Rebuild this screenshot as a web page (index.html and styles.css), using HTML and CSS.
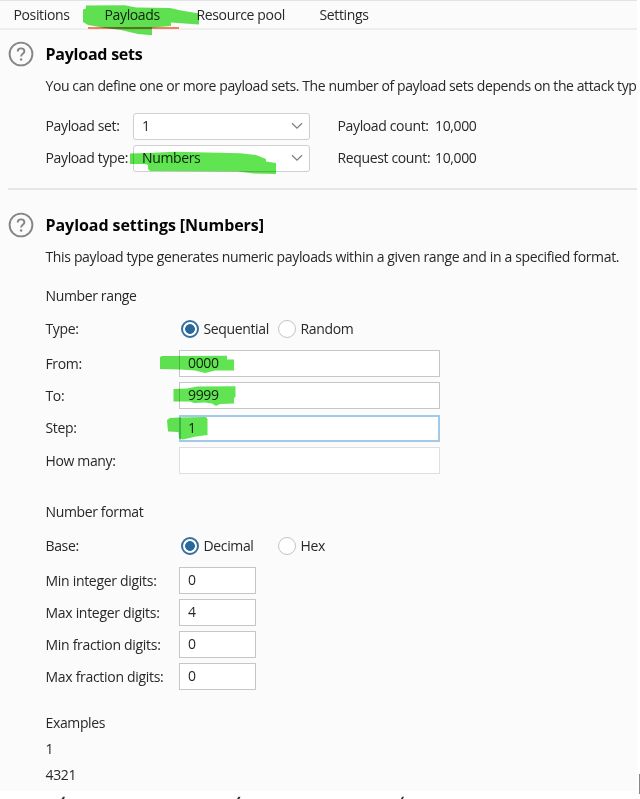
FILE: index.html
```html
<!DOCTYPE html>
<html lang="en">
<head>
<meta charset="utf-8">
<title>Payloads</title>
<link rel="stylesheet" href="styles.css">
</head>
<body>
<main class="panel">
  <nav class="tabs">
    <span class="tab positions">Positions</span>
    <span class="tab payloads active">Payloads</span>
    <span class="tab resource">Resource pool</span>
    <span class="tab">Settings</span>
  </nav>

  <section class="section sets">
    <header class="heading">
      <svg class="help" viewBox="0 0 26 26"><circle cx="13" cy="13" r="11.4"/><path d="M9.7 10.5c0-2 1.4-3.1 3.3-3.1s3.4 1.1 3.4 2.9c0 2.5-3.3 2.6-3.3 5.2"/><circle class="dot" cx="13.1" cy="18.5" r="1.2"/></svg>
      <h2>Payload sets</h2>
    </header>
    <p class="desc first">You can define one or more payload sets. The number of payload sets depends on the attack typ</p>
    <div class="row select-row">
      <label>Payload set:</label>
      <div class="select"><span>1</span><svg class="chevron" viewBox="0 0 12 8"><path d="M1 1.2l5 5 5-5"/></svg></div>
      <span class="count">Payload count:</span><span class="amount">10,000</span>
    </div>
    <div class="row select-row">
      <label>Payload type:</label>
      <div class="select"><span>Numbers</span><svg class="chevron" viewBox="0 0 12 8"><path d="M1 1.2l5 5 5-5"/></svg></div>
      <span class="count">Request count:</span><span class="amount">10,000</span>
    </div>
  </section>

  <section class="section settings">
    <header class="heading">
      <svg class="help" viewBox="0 0 26 26"><circle cx="13" cy="13" r="11.4"/><path d="M9.7 10.5c0-2 1.4-3.1 3.3-3.1s3.4 1.1 3.4 2.9c0 2.5-3.3 2.6-3.3 5.2"/><circle class="dot" cx="13.1" cy="18.5" r="1.2"/></svg>
      <h2 class="long">Payload settings [Numbers]</h2>
    </header>
    <p class="desc second">This payload type generates numeric payloads within a given range and in a specified format.</p>

    <h3 class="range-title">Number range</h3>
    <div class="row radio-row type-row">
      <label>Type:</label>
      <span class="radio checked"></span><span class="option">Sequential</span>
      <span class="radio"></span><span class="option">Random</span>
    </div>
    <div class="fields">
      <div class="row"><label>From:</label><div class="field">0000</div></div>
      <div class="row"><label>To:</label><div class="field">9999</div></div>
      <div class="row"><label>Step:</label><div class="field focus">1</div></div>
      <div class="row"><label>How many:</label><div class="field disabled"></div></div>
    </div>

    <h3 class="format-title">Number format</h3>
    <div class="row radio-row base-row">
      <label>Base:</label>
      <span class="radio checked"></span><span class="option">Decimal</span>
      <span class="radio"></span><span class="option">Hex</span>
    </div>
    <div class="fields short">
      <div class="row"><label>Min integer digits:</label><div class="field">0</div></div>
      <div class="row"><label>Max integer digits:</label><div class="field">4</div></div>
      <div class="row"><label>Min fraction digits:</label><div class="field">0</div></div>
      <div class="row"><label>Max fraction digits:</label><div class="field">0</div></div>
    </div>

    <div class="examples">
      <p>Examples</p>
      <p>1</p>
      <p>4321</p>
    </div>
  </section>
</main>

<!-- Marker strokes and page marks lie over the panel -->
<svg class="overlay" viewBox="0 0 640 799">
  <g class="marker">
    <path d="M86 5.5L125 5.3L136 7.5L170 8L181 10.5L199 13.5V24.5L171 22.5V26L152 27.5V35.2L138 34L121 30L105 28L88 25L83 22V9.5L86 8.5Z"/>
    <path d="M130 153.5L148 153L175 151.7L240 153.3L256 155L266 159V161.5L276 163V174L254 173.5L238 171.5L150 171L148 169V165L145 164H130Z"/>
    <path d="M160 357L162 356L227 355.8V359.5H234V370.5H215L205 373L195 370.5L180 369.5L160 369Z"/>
    <path d="M173.5 389L187 388.5L197 386.5L235.5 386.2V397L234 398V403.5L220 404L216 406L212 403.5L205 402.5L194 403L190 401.5H173.5Z"/>
    <path d="M167 420L170 418L179 417.5L206 417L207.5 419V435L196 436.5L183 439.5L179 438.5L178.5 432L168 431.5Z"/>
  </g>
  <g class="marks">
    <path d="M61.5 799L63 796.7H65L64 799Z"/>
    <path d="M237 799L238.5 796.7H240.5L239.5 799Z"/>
    <path d="M401 799L402 796.7H404L403 799Z"/>
    <path class="edge" d="M639 774H640V794H639Z"/>
  </g>
</svg>
</body>
</html>
```

FILE: styles.css
```css
* { box-sizing: border-box; }

body {
  margin: 0;
  width: 640px;
  height: 799px;
  overflow: hidden;
  position: relative;
  background: #fff;
  color: #282828;
  font: 14px/20px "Open Sans", "Noto Sans", sans-serif;
  letter-spacing: -0.36px;
}

h2, h3, p { margin: 0; }

.panel {
  width: 637px;
  height: 791px;
  background: #fbfbfb;
  border-top: 1px solid #dfe5e4;
  overflow: hidden;
  white-space: nowrap;
}

.tabs {
  display: flex;
  height: 29px;
  padding-left: 13.5px;
  border-bottom: 2px solid #eeeeee;
}
.tab { height: 28px; padding-top: 4px; }
.positions { width: 74px; }
.payloads { width: 91px; padding-left: 17px; margin-right: 18px; }
.active { border-bottom: 2px solid #f87c60; }
.resource { width: 123px; }

.section { padding-left: 45.5px; }
.sets {
  height: 158px;
  padding-top: 11px;
}
.settings::before {
  content: "";
  display: block;
  height: 2px;
  margin: 0 0 22px -37.5px;
  background: #e6e6e6;
}

.heading {
  display: flex;
  align-items: center;
  height: 26px;
  margin-left: -37.5px;
}
.help {
  width: 26px;
  height: 26px;
  margin-right: 11.5px;
  fill: none;
  stroke: #858585;
  stroke-width: 1.9;
}
.help .dot { fill: #858585; stroke: none; }
h2 {
  color: #050505;
  font-size: 16px;
  font-weight: 700;
  letter-spacing: -0.24px;
}
.long { letter-spacing: -0.06px; }
.desc { height: 20px; margin-top: 9px; }
.first { letter-spacing: -0.41px; }
.second { letter-spacing: -0.35px; }

.row { display: flex; align-items: center; }
.select-row { height: 26px; margin-bottom: 6px; }
.first + .select-row { margin-top: 17px; }
.select-row label { width: 87.5px; }
.select {
  display: flex;
  align-items: center;
  justify-content: space-between;
  width: 177px;
  height: 27px;
  padding: 0 6px 0 8px;
  background: #fff;
  border: 1.5px solid #cfcfcf;
  border-radius: 3px;
}
.chevron {
  width: 12px;
  height: 8px;
  fill: none;
  stroke: #808080;
  stroke-width: 1.3;
}
.count { width: 97.5px; margin-left: 27.5px; }

h3 { height: 20px; font-size: 14px; font-weight: 400; }
.range-title { margin-top: 19px; }
.format-title { margin-top: 28px; }

.radio-row { height: 20px; }
.type-row { margin-top: 13px; }
.base-row { margin-top: 14px; }
.radio-row label { width: 135.5px; }
.radio {
  width: 18px;
  height: 18px;
  border: 1.5px solid #c4c4c4;
  border-radius: 50%;
  background: #fff;
}
.checked {
  border: 2px solid #356f9f;
  background: radial-gradient(circle, #28689a 0 4.5px, #fff 5.2px);
}
.option { width: 79px; padding-left: 4.5px; }

.fields {
  display: grid;
  gap: 5.4px;
  margin-top: 11px;
}
.fields label { width: 133.5px; }
.field {
  width: 261px;
  height: 27px;
  padding: 2px 8px;
  border: 1.5px solid #c6c6c6;
  background: #fff;
}
.focus { padding: 1px 7px; border: 2px solid #a2c9e8; }
.disabled { border-color: #dfdfdf; }
.short { gap: 5px; }
.short label { letter-spacing: -0.3px; }
.short .field { width: 77px; }

.examples { margin-top: 22.5px; }
.examples p { height: 26px; }

.overlay {
  position: absolute;
  inset: 0;
  width: 640px;
  height: 799px;
  mix-blend-mode: multiply;
  pointer-events: none;
}
.marker { fill: #60e451; }
.marks { fill: #333; }
.edge { fill: #888; }
```
